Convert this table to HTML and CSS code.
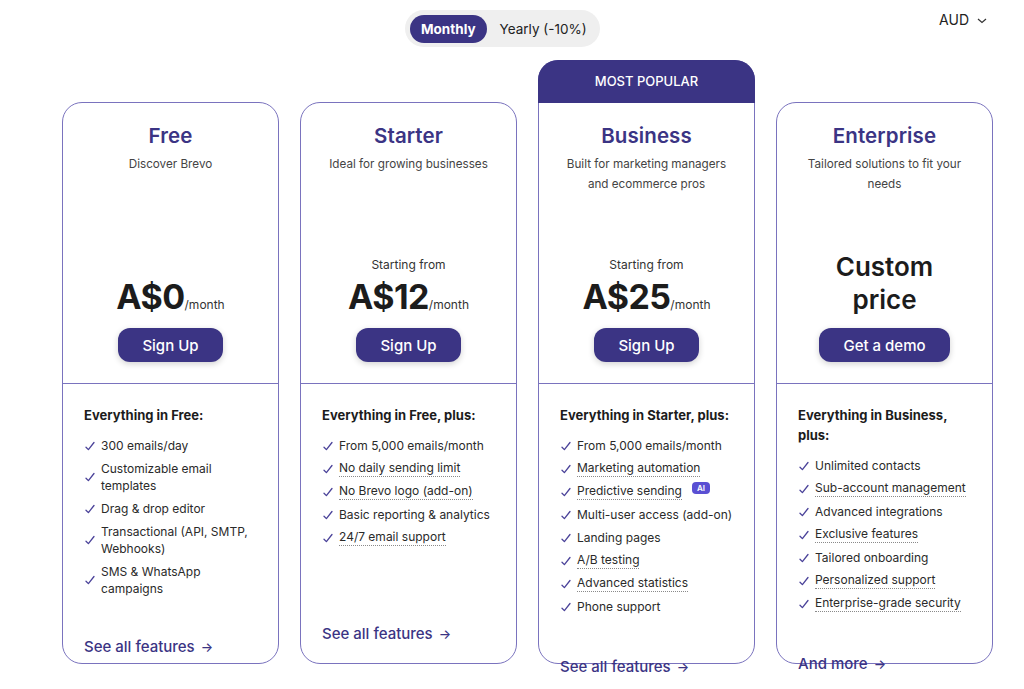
FILE: index.html
```html
<!DOCTYPE html>
<html lang="en">
<head>
<meta charset="utf-8">
<title>Pricing</title>
<link rel="stylesheet" href="styles.css">
</head>
<body>
<div class="page">
  <div class="topbar">
    <div class="toggle">
      <span class="toggle-opt active">Monthly</span>
      <span class="toggle-opt">Yearly (-10%)</span>
    </div>
    <div class="currency">AUD
      <svg class="chev" width="10" height="6" viewBox="0 0 10 6"><path d="M1 1 L5 4.5 L9 1" fill="none" stroke="#333" stroke-width="1.2"/></svg>
    </div>
  </div>

  <div class="cards">
    <!-- Free -->
    <div class="card">
      <div class="card-top">
        <h2 class="plan">Free</h2>
        <p class="desc">Discover Brevo</p>
        <div class="price-block">
          <div class="price"><span class="amount">A$0</span><span class="per">/month</span></div>
          <a class="btn">Sign Up</a>
        </div>
      </div>
      <div class="card-body">
        <h3 class="feat-title">Everything in Free:</h3>
        <ul class="feats">
          <li><svg class="chk" viewBox="0 0 10 10"><path d="M1 6.2 L3.4 8.6 L9 1.5"/></svg><span>300 emails/day</span></li>
          <li><svg class="chk" viewBox="0 0 10 10"><path d="M1 6.2 L3.4 8.6 L9 1.5"/></svg><span>Customizable email templates</span></li>
          <li><svg class="chk" viewBox="0 0 10 10"><path d="M1 6.2 L3.4 8.6 L9 1.5"/></svg><span>Drag &amp; drop editor</span></li>
          <li><svg class="chk" viewBox="0 0 10 10"><path d="M1 6.2 L3.4 8.6 L9 1.5"/></svg><span>Transactional (API, SMTP, Webhooks)</span></li>
          <li><svg class="chk" viewBox="0 0 10 10"><path d="M1 6.2 L3.4 8.6 L9 1.5"/></svg><span>SMS &amp; WhatsApp campaigns</span></li>
        </ul>
        <a class="more more-free">See all features <span class="arr">→</span></a>
      </div>
    </div>

    <!-- Starter -->
    <div class="card">
      <div class="card-top">
        <h2 class="plan">Starter</h2>
        <p class="desc">Ideal for growing businesses</p>
        <div class="price-block">
          <div class="from">Starting from</div>
          <div class="price"><span class="amount">A$12</span><span class="per">/month</span></div>
          <a class="btn">Sign Up</a>
        </div>
      </div>
      <div class="card-body">
        <h3 class="feat-title">Everything in Free, plus:</h3>
        <ul class="feats">
          <li><svg class="chk" viewBox="0 0 10 10"><path d="M1 6.2 L3.4 8.6 L9 1.5"/></svg><span>From 5,000 emails/month</span></li>
          <li><svg class="chk" viewBox="0 0 10 10"><path d="M1 6.2 L3.4 8.6 L9 1.5"/></svg><span class="dot">No daily sending limit</span></li>
          <li><svg class="chk" viewBox="0 0 10 10"><path d="M1 6.2 L3.4 8.6 L9 1.5"/></svg><span class="dot">No Brevo logo (add-on)</span></li>
          <li><svg class="chk" viewBox="0 0 10 10"><path d="M1 6.2 L3.4 8.6 L9 1.5"/></svg><span>Basic reporting &amp; analytics</span></li>
          <li><svg class="chk" viewBox="0 0 10 10"><path d="M1 6.2 L3.4 8.6 L9 1.5"/></svg><span class="dot">24/7 email support</span></li>
        </ul>
        <a class="more more-starter">See all features <span class="arr">→</span></a>
      </div>
    </div>

    <!-- Business -->
    <div class="card card-popular">
      <div class="badge">MOST POPULAR</div>
      <div class="card-top">
        <h2 class="plan">Business</h2>
        <p class="desc">Built for marketing managers and ecommerce pros</p>
        <div class="price-block">
          <div class="from">Starting from</div>
          <div class="price"><span class="amount">A$25</span><span class="per">/month</span></div>
          <a class="btn">Sign Up</a>
        </div>
      </div>
      <div class="card-body">
        <h3 class="feat-title">Everything in Starter, plus:</h3>
        <ul class="feats">
          <li><svg class="chk" viewBox="0 0 10 10"><path d="M1 6.2 L3.4 8.6 L9 1.5"/></svg><span>From 5,000 emails/month</span></li>
          <li><svg class="chk" viewBox="0 0 10 10"><path d="M1 6.2 L3.4 8.6 L9 1.5"/></svg><span class="dot">Marketing automation</span></li>
          <li><svg class="chk" viewBox="0 0 10 10"><path d="M1 6.2 L3.4 8.6 L9 1.5"/></svg><span class="dot">Predictive sending</span><span class="ai">AI</span></li>
          <li><svg class="chk" viewBox="0 0 10 10"><path d="M1 6.2 L3.4 8.6 L9 1.5"/></svg><span>Multi-user access (add-on)</span></li>
          <li><svg class="chk" viewBox="0 0 10 10"><path d="M1 6.2 L3.4 8.6 L9 1.5"/></svg><span>Landing pages</span></li>
          <li><svg class="chk" viewBox="0 0 10 10"><path d="M1 6.2 L3.4 8.6 L9 1.5"/></svg><span class="dot">A/B testing</span></li>
          <li><svg class="chk" viewBox="0 0 10 10"><path d="M1 6.2 L3.4 8.6 L9 1.5"/></svg><span class="dot">Advanced statistics</span></li>
          <li><svg class="chk" viewBox="0 0 10 10"><path d="M1 6.2 L3.4 8.6 L9 1.5"/></svg><span>Phone support</span></li>
        </ul>
        <a class="more more-business">See all features <span class="arr">→</span></a>
      </div>
    </div>

    <!-- Enterprise -->
    <div class="card">
      <div class="card-top">
        <h2 class="plan">Enterprise</h2>
        <p class="desc">Tailored solutions to fit your needs</p>
        <div class="price-block">
          <div class="custom">Custom<br>price</div>
          <a class="btn btn-wide">Get a demo</a>
        </div>
      </div>
      <div class="card-body">
        <h3 class="feat-title">Everything in Business, plus:</h3>
        <ul class="feats">
          <li><svg class="chk" viewBox="0 0 10 10"><path d="M1 6.2 L3.4 8.6 L9 1.5"/></svg><span>Unlimited contacts</span></li>
          <li><svg class="chk" viewBox="0 0 10 10"><path d="M1 6.2 L3.4 8.6 L9 1.5"/></svg><span class="dot">Sub-account management</span></li>
          <li><svg class="chk" viewBox="0 0 10 10"><path d="M1 6.2 L3.4 8.6 L9 1.5"/></svg><span>Advanced integrations</span></li>
          <li><svg class="chk" viewBox="0 0 10 10"><path d="M1 6.2 L3.4 8.6 L9 1.5"/></svg><span class="dot">Exclusive features</span></li>
          <li><svg class="chk" viewBox="0 0 10 10"><path d="M1 6.2 L3.4 8.6 L9 1.5"/></svg><span>Tailored onboarding</span></li>
          <li><svg class="chk" viewBox="0 0 10 10"><path d="M1 6.2 L3.4 8.6 L9 1.5"/></svg><span class="dot">Personalized support</span></li>
          <li><svg class="chk" viewBox="0 0 10 10"><path d="M1 6.2 L3.4 8.6 L9 1.5"/></svg><span class="dot">Enterprise-grade security</span></li>
        </ul>
        <a class="more more-enterprise">And more <span class="arr">→</span></a>
      </div>
    </div>
  </div>
</div>
</body>
</html>
```

FILE: styles.css
```css
* { box-sizing: border-box; }
html, body { margin: 0; padding: 0; background: #fff; }
body {
  font-family: Inter, "Noto Sans", "Liberation Sans", sans-serif;
  color: #1f1f1f;
  -webkit-font-smoothing: antialiased;
}
.page {
  width: 931px;
  margin-left: 62px;
  padding-bottom: 25px;
}
.topbar {
  height: 60px;
  display: flex;
  align-items: flex-start;
  padding-top: 10px;
}
.toggle {
  margin-left: 343px;
  height: 37px;
  width: 195px;
  background: #efefef;
  border-radius: 19px;
  display: flex;
  align-items: center;
  padding: 0 5px;
  gap: 13px;
}
.toggle-opt {
  font-size: 13.5px;
  color: #222;
  line-height: 28px;
}
.toggle-opt.active {
  background: #3b3484;
  color: #fff;
  font-weight: 700;
  border-radius: 14px;
  padding: 0 11px;
  height: 28px;
}
.currency {
  margin-left: auto;
  margin-right: 6px;
  margin-top: 1px;
  font-size: 14px;
  color: #222;
  display: flex;
  align-items: center;
  gap: 8px;
  line-height: 18px;
}
.chev { margin-top: 1px; }

.cards {
  display: flex;
  gap: 21px;
  align-items: flex-end;
}
.card {
  width: 217px;
  height: 562px;
  border: 1px solid #7a73be;
  border-radius: 20px;
  display: flex;
  flex-direction: column;
  flex-shrink: 0;
  background: #fff;
}
.card-popular {
  height: 604px;
}
.badge {
  height: 43px;
  margin: -1px -1px 0;
  background: #3b3484;
  border-radius: 20px 20px 0 0;
  color: #fff;
  font-size: 13px;
  font-weight: 500;
  text-align: center;
  line-height: 43px;
  flex-shrink: 0;
}
.card-top {
  height: 281px;
  flex-shrink: 0;
  border-bottom: 1px solid #7a73be;
  display: flex;
  flex-direction: column;
  align-items: center;
  padding: 19px 20px 21px;
  text-align: center;
}
.plan {
  margin: 0;
  font-size: 20.5px;
  font-weight: 600;
  color: #3b3484;
  line-height: 28px;
  letter-spacing: 0.1px;
}
.desc {
  margin: 4px 0 0;
  font-size: 11.7px;
  line-height: 20px;
  color: #444;
}
.price-block {
  margin-top: auto;
  display: flex;
  flex-direction: column;
  align-items: center;
}
.from {
  font-size: 12px;
  line-height: 18px;
  color: #333;
}
.price {
  margin-top: 5px;
  line-height: 36px;
  display: flex;
  align-items: baseline;
}
.amount {
  font-size: 34px;
  font-weight: 700;
  color: #1c1c1c;
  letter-spacing: -0.6px;
}
.per {
  font-size: 12px;
  color: #333;
}
.custom {
  font-size: 26px;
  font-weight: 600;
  line-height: 33px;
  color: #1c1c1c;
  margin-bottom: 7px;
}
.btn {
  margin-top: 5px;
  height: 34px;
  width: 105px;
  border-radius: 12px;
  background: #3b3484;
  color: #fff;
  font-size: 15px;
  font-weight: 500;
  display: flex;
  align-items: center;
  justify-content: center;
  box-shadow: 0 2px 6px rgba(0, 0, 0, 0.18);
}
.btn-wide { width: 131px; }

.card-body {
  padding: 21px 20px 0 21px;
  flex-shrink: 0;
  display: flex;
  flex-direction: column;
  align-items: flex-start;
}
.feat-title {
  margin: 0;
  font-size: 13px;
  font-weight: 700;
  line-height: 20px;
  color: #1c1c1c;
}
.feats {
  list-style: none;
  margin: 12px 0 0;
  padding: 0;
  display: flex;
  flex-direction: column;
  gap: 6px;
}
.feats li {
  display: flex;
  align-items: center;
  gap: 6px;
  font-size: 12px;
  line-height: 17px;
  color: #2a2a2a;
}
.chk {
  width: 10px;
  height: 10px;
  flex-shrink: 0;
  margin-left: 1px;
}
.chk path {
  fill: none;
  stroke: #4a4299;
  stroke-width: 1.3;
  stroke-linecap: round;
  stroke-linejoin: round;
}
.dot {
  border-bottom: 1px dotted #8a8a8a;
  line-height: 16px;
}
.ai {
  margin-left: 4px;
  background: #5a4fd3;
  color: #fff;
  font-size: 8px;
  font-weight: 600;
  line-height: 12px;
  height: 12px;
  padding: 0 5px;
  border-radius: 4px;
  align-self: flex-start;
  margin-top: -1px;
}
.more {
  font-size: 15px;
  font-weight: 500;
  color: #3b3484;
  line-height: 20px;
  display: flex;
  align-items: center;
  gap: 6px;
}
.arr { font-size: 13px; }
.more-free { margin-top: 40px; }
.more-starter { margin-top: 78px; }
.more-business { margin-top: 42px; }
.more-enterprise { margin-top: 42px; }
```
